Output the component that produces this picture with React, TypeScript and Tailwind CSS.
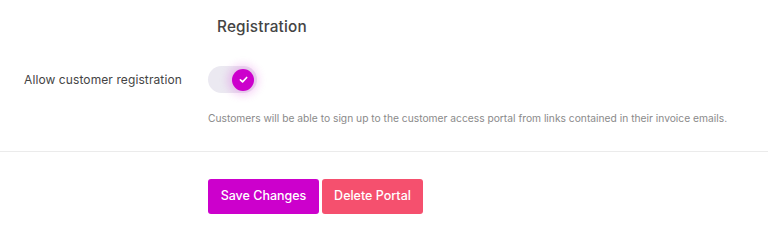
export default function App() {
  return (
    <div className="min-h-screen bg-white text-[#333] font-['Inter','Noto_Sans',sans-serif]">
      <div className="pt-[16px]">
        <div className="grid grid-cols-[208px_1fr]">
          <div />
          <h2 className="pl-[9px] text-[15.3px] leading-[22px] font-medium text-[#444] tracking-[0.2px]">Registration</h2>
        </div>

        <div className="mt-[28px] grid grid-cols-[208px_1fr] items-center">
          <label className="pl-[24px] text-[12px] text-[#444] tracking-[0.1px]">Allow customer registration</label>
          <div>
            <button
              type="button"
              role="switch"
              aria-checked="true"
              className="relative flex h-[27px] w-[49px] items-center rounded-full bg-[#ebe9f1]"
            >
              <span className="absolute right-[3px] flex h-[22px] w-[22px] items-center justify-center rounded-full bg-[#cc00cc] shadow-[0_0_10px_4px_rgba(204,0,204,0.2)]">
                <svg width="11" height="11" viewBox="0 0 12 12" fill="none" stroke="white" strokeWidth="1.8" strokeLinecap="round" strokeLinejoin="round">
                  <path d="M2.6 6.4 L5 8.6 L9.5 3.8" />
                </svg>
              </span>
            </button>
          </div>
        </div>

        <div className="mt-[18px] grid grid-cols-[208px_1fr]">
          <div />
          <p className="text-[10.25px] leading-[14px] text-[#8a8a8a]">
            Customers will be able to sign up to the customer access portal from links contained in their invoice emails.
          </p>
        </div>
      </div>

      <div className="mt-[26px] border-t border-[#ebebeb]" />

      <div className="grid grid-cols-[208px_1fr] pt-[27px]">
        <div />
        <div className="flex gap-[3px]">
          <button className="h-[35px] w-[111px] rounded-[3px] bg-[#cc00cc] text-[12.5px] font-medium text-white">Save Changes</button>
          <button className="h-[35px] w-[101px] rounded-[3px] bg-[#f5506e] text-[12.5px] font-medium text-white">Delete Portal</button>
        </div>
      </div>
    </div>
  )
}
